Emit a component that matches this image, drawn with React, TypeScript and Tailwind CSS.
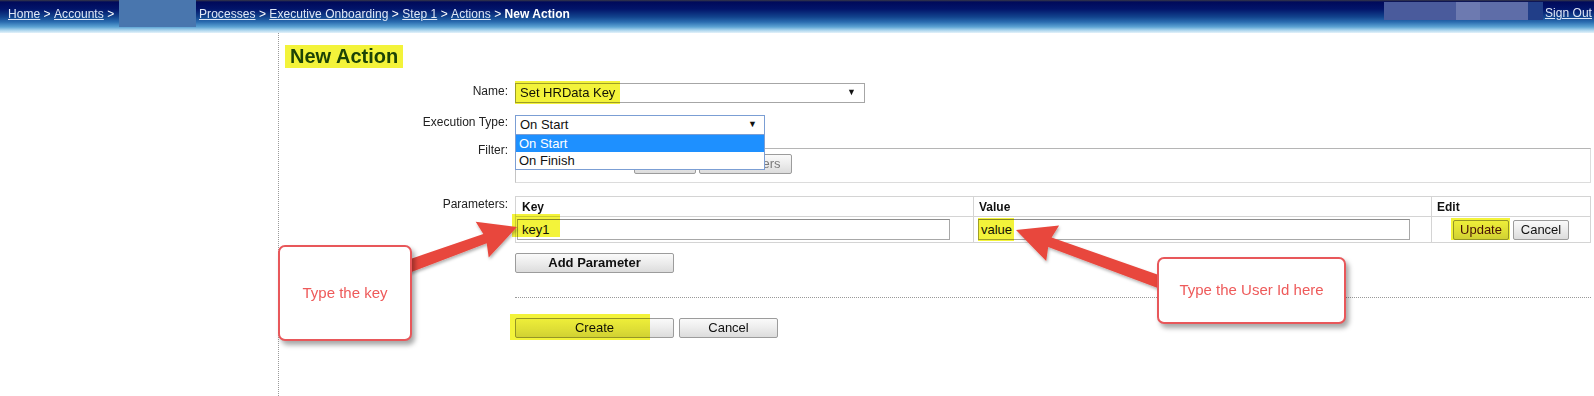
import React from "react";

const FONT = "font-['Liberation_Sans',Arial,sans-serif]";

function arrowPoly(
  x1: number,
  y1: number,
  x2: number,
  y2: number,
  sw0: number,
  sw1: number,
  hw: number,
  hl: number
) {
  const dx = x2 - x1;
  const dy = y2 - y1;
  const L = Math.hypot(dx, dy);
  const ux = dx / L;
  const uy = dy / L;
  const px = -uy;
  const py = ux;
  const bx = x2 - ux * hl;
  const by = y2 - uy * hl;
  const pts = [
    [x1 + (px * sw0) / 2, y1 + (py * sw0) / 2],
    [bx + (px * sw1) / 2, by + (py * sw1) / 2],
    [bx + (px * hw) / 2 - ux * 3, by + (py * hw) / 2 - uy * 3],
    [x2, y2],
    [bx - (px * hw) / 2 - ux * 3, by - (py * hw) / 2 - uy * 3],
    [bx - (px * sw1) / 2, by - (py * sw1) / 2],
    [x1 - (px * sw0) / 2, y1 - (py * sw0) / 2],
  ];
  return pts.map((p) => p.map((v) => v.toFixed(1)).join(",")).join(" ");
}

function Sep() {
  return <span className="whitespace-pre text-white"> &gt; </span>;
}

function Crumb({ children }: { children: React.ReactNode }) {
  return <a className="underline text-[#dfe7f6] cursor-pointer">{children}</a>;
}

function Btn({
  children,
  className = "",
}: {
  children: React.ReactNode;
  className?: string;
}) {
  return (
    <button
      className={
        "h-[20px] border border-[#9c9c9c] rounded-[2px] bg-[linear-gradient(180deg,#fafafa_0%,#ececec_50%,#dcdcdc_100%)] text-[13px] leading-[18px] text-[#111] " +
        className
      }
    >
      {children}
    </button>
  );
}

function Highlight({ className }: { className: string }) {
  return (
    <span
      className={
        "absolute bg-[#f3f33a] mix-blend-multiply pointer-events-none " + className
      }
    />
  );
}

export default function App() {
  return (
    <div
      className={
        "relative w-[1594px] h-[396px] overflow-hidden bg-white " + FONT
      }
    >
      {/* Header */}
      <header className="h-[33px] flex items-start bg-[linear-gradient(180deg,#3a3a48_0px,#000a5a_2px,#02146a_9px,#12448e_17px,#2a6cb0_22px,#5ea4d4_27px,#a6d2ec_30px,#e4f2fa_33px)] text-[12px] tracking-[0.05px]">
        <div className="flex items-center h-[27px] pl-[8px]">
          <Crumb>Home</Crumb>
          <Sep />
          <Crumb>Accounts</Crumb>
          <Sep />
          <span className="ml-[1px] w-[77px] h-[27px] bg-[#4976ae]" />
          <span className="whitespace-pre"> </span>
          <Crumb>Processes</Crumb>
          <Sep />
          <Crumb>Executive Onboarding</Crumb>
          <Sep />
          <Crumb>Step 1</Crumb>
          <Sep />
          <Crumb>Actions</Crumb>
          <Sep />
          <span className="font-bold text-white">New Action</span>
        </div>
        <div className="ml-auto flex items-start h-[27px] pr-[2px]">
          <div className="flex h-[18px] mt-[2px]">
            <span className="w-[72px] bg-[#4a5b9c]" />
            <span className="w-[24px] bg-[#6d7ab0]" />
            <span className="w-[48px] bg-[#5e6da8]" />
            <span className="w-[15px] bg-[#213e88]" />
          </div>
          <a className="ml-[2px] mt-[6px] leading-[14px] underline text-[#dfe7f6] cursor-pointer">
            Sign Out
          </a>
        </div>
      </header>

      <div className="flex h-[363px]">
        <aside className="w-[279px] shrink-0 border-r border-dotted border-[#9a9a9a]" />
        <main className="flex-1 pl-[6px] pr-[3px] pt-[12px] text-[12px] text-[#222]">
          <div className="flex">
            <h1 className="bg-[#f3f33a] px-[5px] text-[20px] leading-[23px] font-bold text-[#1c4306]">
              New Action
            </h1>
          </div>

          {/* Name */}
          <div className="flex mt-[15px]">
            <div className="w-[223px] text-right leading-[14px] pt-[1px]">Name:</div>
            <div className="ml-[7px] flex-1">
              <div className="relative w-[350px] h-[20px] border border-[#a6a6a6] bg-white flex items-center pl-[4px] pr-[8px] text-[13px] text-[#111]">
                <span>Set HRData Key</span>
                <span className="ml-auto text-[9px]">▼</span>
                <Highlight className="-left-[1px] -top-[3px] w-[105px] h-[23px]" />
              </div>
            </div>
          </div>

          {/* Execution Type */}
          <div className="flex mt-[12px]">
            <div className="w-[223px] text-right leading-[14px]">Execution Type:</div>
            <div className="ml-[7px] flex-1">
              <div className="relative w-[250px]">
                <div className="h-[20px] border border-[#7b9ed4] bg-white flex items-center pl-[4px] pr-[7px] text-[13px] text-[#111]">
                  <span>On Start</span>
                  <span className="ml-auto text-[9px]">▼</span>
                </div>
                <div className="absolute left-0 top-[19px] w-[250px] z-10 border border-[#7b9ed4] bg-white text-[13px]">
                  <div className="h-[17px] leading-[17px] pl-[3px] bg-[#1e90ff] text-white">
                    On Start
                  </div>
                  <div className="h-[17px] leading-[17px] pl-[3px] text-[#111]">
                    On Finish
                  </div>
                </div>
              </div>
            </div>
          </div>

          {/* Filter */}
          <div className="flex mt-[8px]">
            <div className="w-[223px] text-right leading-[14px]">Filter:</div>
            <div className="ml-[7px] flex-1">
              <div className="mt-[5px] h-[35px] border border-[#dcdcdc] border-t-[#b5b5b5] border-l-[#c4c4c4] flex items-start pl-[118px] pt-[5px] gap-[3px]">
                <Btn className="w-[62px] h-[18px] text-[11px] leading-[16px] text-[#666]">
                  Add Filter
                </Btn>
                <Btn className="w-[93px] h-[18px] text-[11px] leading-[16px] !text-[#7a7a7a]">
                  Clear Filters
                </Btn>
              </div>
            </div>
          </div>

          {/* Parameters */}
          <div className="flex mt-[13px]">
            <div className="w-[223px] text-right leading-[14px] pt-[1px]">Parameters:</div>
            <div className="ml-[7px] flex-1">
              <table className="w-full table-fixed border-collapse border border-[#cfcfcf]">
                <colgroup>
                  <col className="w-[458px]" />
                  <col className="w-[458px]" />
                  <col />
                </colgroup>
                <thead>
                  <tr className="h-[20px]">
                    <th className="border border-[#d4d4d4] text-left font-bold pl-[6px] text-[12px] text-[#111]">
                      Key
                    </th>
                    <th className="border border-[#d4d4d4] text-left font-bold pl-[5px] text-[12px] text-[#111]">
                      Value
                    </th>
                    <th className="border border-[#d4d4d4] text-left font-bold pl-[5px] text-[12px] text-[#111]">
                      Edit
                    </th>
                  </tr>
                </thead>
                <tbody>
                  <tr className="h-[26px]">
                    <td className="border border-[#d4d4d4] pl-[1px]">
                      <div className="relative w-[433px] h-[21px] border border-[#a8a8a8] border-t-[#8e8e8e] bg-white flex items-center pl-[4px] text-[13px] text-[#111]">
                        key1
                        <Highlight className="-left-[6px] -top-[6px] w-[48px] h-[23px]" />
                      </div>
                    </td>
                    <td className="border border-[#d4d4d4] pl-[4px]">
                      <div className="relative w-[432px] h-[21px] border border-[#a8a8a8] border-t-[#8e8e8e] bg-white flex items-center pl-[2px] text-[13px] text-[#111]">
                        value
                        <Highlight className="-left-[1px] -top-[2px] w-[36px] h-[23px]" />
                      </div>
                    </td>
                    <td className="border border-[#d4d4d4] text-center">
                      <div className="flex justify-center gap-[4px]">
                        <div className="relative">
                          <Btn className="w-[56px] !text-[#4a1212]">Update</Btn>
                          <Highlight className="-left-[2px] -top-[2px] w-[59px] h-[22px]" />
                        </div>
                        <Btn className="w-[56px]">Cancel</Btn>
                      </div>
                    </td>
                  </tr>
                </tbody>
              </table>

              <div className="mt-[10px]">
                <Btn className="w-[159px] font-bold">Add Parameter</Btn>
              </div>

              <div className="mt-[24px] border-t border-dotted border-[#999]" />

              <div className="mt-[20px] flex gap-[5px]">
                <div className="relative">
                  <Btn className="w-[159px]">Create</Btn>
                  <Highlight className="-left-[5px] -top-[4px] w-[140px] h-[26px]" />
                </div>
                <Btn className="w-[99px]">Cancel</Btn>
              </div>
            </div>
          </div>
        </main>
      </div>

      {/* Arrows overlay */}
      <svg
        className="absolute left-0 top-0 pointer-events-none z-20"
        width={1594}
        height={396}
      >
        <defs>
          <filter id="sh" x="-10%" y="-10%" width="130%" height="140%">
            <feDropShadow dx="1" dy="2" stdDeviation="1.5" floodColor="#000" floodOpacity="0.3" />
          </filter>
        </defs>
        <polygon
          points={arrowPoly(404, 268, 517, 227, 13, 10, 38, 34)}
          fill="#e8473d"
          filter="url(#sh)"
        />
        <polygon
          points={arrowPoly(1168, 285, 1016, 230, 13, 10, 38, 36)}
          fill="#e8473d"
          filter="url(#sh)"
        />
      </svg>

      {/* Callouts */}
      <div className="absolute left-[278px] top-[245px] w-[134px] h-[96px] z-30 rounded-[7px] border-2 border-[#e8575a] bg-white shadow-[3px_4px_5px_rgba(0,0,0,0.35)] flex items-center justify-center text-[15px] text-[#ee5a5a]">
        Type the key
      </div>
      <div className="absolute left-[1157px] top-[257px] w-[189px] h-[67px] z-30 rounded-[7px] border-2 border-[#e8575a] bg-white shadow-[3px_4px_5px_rgba(0,0,0,0.35)] flex items-center justify-center text-[15px] text-[#ee5a5a]">
        Type the User Id here
      </div>
    </div>
  );
}
